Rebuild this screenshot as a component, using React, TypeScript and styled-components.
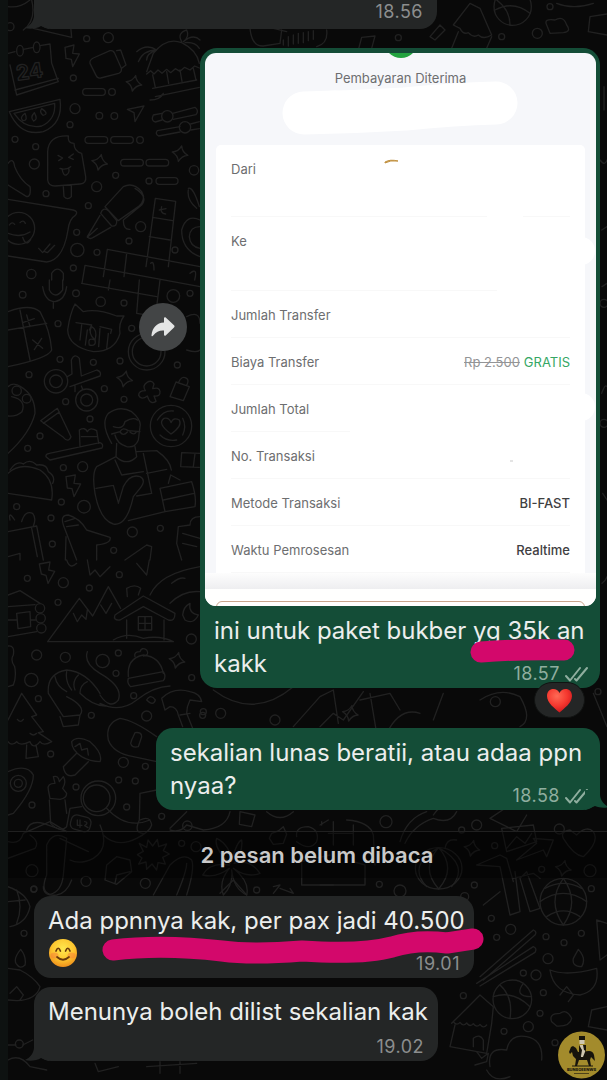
import React from "react";
import styled, { createGlobalStyle } from "styled-components";

const GlobalStyle = createGlobalStyle`
  *, *::before, *::after { box-sizing: border-box; }
  html, body { margin: 0; background: #090909; }
  body { font-family: Inter, Roboto, "Liberation Sans", sans-serif; color: #eceeed; }
  p, dl, dd, h2 { margin: 0; }
`;

const Screen = styled.div`
  position: relative;
  min-height: 100vh;
  padding-bottom: 18px;
  overflow: hidden;
  border-left: 8px solid #0e1211;
  background: #090909;
`;

const WallpaperSvg = styled.svg`
  position: absolute;
  top: 0;
  left: -8px;
  fill: none;
  stroke: #212121;
  stroke-linecap: round;
  stroke-linejoin: round;
`;

const Thread = styled.main`
  position: relative;
  display: flex;
  flex-direction: column;
`;

const Row = styled.div<{ $side: "in" | "out"; $gap: number }>`
  display: flex;
  align-items: center;
  justify-content: ${(p) => (p.$side === "out" ? "flex-end" : "flex-start")};
  gap: 13px;
  margin-top: ${(p) => p.$gap}px;
  padding: 0 7px 0 26px;
`;

const Bubble = styled.article<{ $side: "in" | "out"; $width: number; $flatTop?: boolean }>`
  position: relative;
  width: ${(p) => p.$width}px;
  max-width: 100%;
  border-radius: ${(p) => (p.$flatTop ? "0 0 17px 17px" : "17px")};
  background: ${(p) => (p.$side === "out" ? "#144d37" : "#242626")};
`;

const Body = styled.div`
  display: flow-root;
  padding: 8px 8px 4px 14px;
`;

const Message = styled.p`
  display: inline;
  font-size: 24px;
  line-height: 33px;
`;

const Meta = styled.span<{ $side: "in" | "out"; $offset: number }>`
  float: right;
  display: flex;
  align-items: center;
  gap: 5px;
  margin-top: ${(p) => p.$offset}px;
  margin-right: ${(p) => (p.$side === "out" ? 4 : 6)}px;
  font-size: 18px;
  line-height: 20px;
  letter-spacing: 0.5px;
  color: ${(p) => (p.$side === "out" ? "#8fae9f" : "#8c8e8e")};
`;

const Tail = styled.svg<{ $side: "in" | "out" }>`
  position: absolute;
  bottom: 0;
  ${(p) => (p.$side === "out" ? "right: -9px;" : "left: -9px;")}
  fill: ${(p) => (p.$side === "out" ? "#144d37" : "#242626")};
`;

const Marker = styled.svg`
  position: absolute;
  z-index: 1;
  overflow: visible;
  fill: none;
  stroke: #d3086b;
  stroke-width: 21;
  stroke-linecap: round;
  stroke-linejoin: round;
  pointer-events: none;
`;

const ForwardButton = styled.button`
  display: grid;
  place-items: center;
  flex: none;
  width: 48px;
  height: 48px;
  margin-bottom: 82px;
  padding: 0;
  border: 0;
  border-radius: 50%;
  background: #434546;
`;

const Reaction = styled.button`
  position: absolute;
  right: 15px;
  bottom: -30px;
  display: grid;
  place-items: center;
  width: 51px;
  height: 36px;
  padding: 0;
  border: 1px solid #111312;
  border-radius: 18px;
  background: #242626;
`;

const Receipt = styled.section`
  position: relative;
  margin: 0 4px 0 5px;
  border-radius: 11px;
  overflow: hidden;
  background: #f6f7fa;
  color: #6d6e70;
  font-size: 13px;
  line-height: 17px;
`;

const BubbleTop = styled.div`
  padding-top: 5px;
`;

const ReceiptHeader = styled.header`
  height: 92px;
  padding-top: 17px;
  text-align: center;
`;

const ReceiptTitle = styled.h2`
  font-size: 13px;
  line-height: 17px;
  font-weight: 400;
`;

const ReceiptArt = styled.svg`
  position: absolute;
  top: 0;
  left: 50%;
  margin-left: -196px;
`;

const ReceiptCard = styled.dl`
  margin: 0 11px;
  padding: 0 15px;
  border-radius: 5px 5px 0 0;
  background: #ffffff;
`;

const ReceiptRow = styled.div<{ $tall?: boolean }>`
  display: flex;
  justify-content: space-between;
  height: ${(p) => (p.$tall ? 74 : 47)}px;
  padding-top: 16px;
  border-bottom: 1px solid #f8f8f8;
`;

const Value = styled.dd`
  color: #3f4042;
  font-weight: 500;
`;

const Struck = styled.s`
  margin-right: 4px;
  font-weight: 400;
  color: #939496;
`;

const Free = styled.span`
  font-weight: 400;
  color: #35a765;
`;

const Fade = styled.div`
  height: 16px;
  background: linear-gradient(#fdfdfd, #eeeef0);
`;

const ReceiptFooter = styled.footer`
  height: 17px;
  padding: 12px 11px 0;
  background: #fffffe;
  overflow: hidden;
`;

const FooterOutline = styled.div`
  height: 20px;
  border: 1px solid #c9a58c;
  border-radius: 6px;
`;

const UnreadBand = styled.div`
  display: flex;
  justify-content: center;
  margin-top: 21px;
  padding: 7px 0 7px 19px;
  border-top: 1px solid #202020;
  background: rgba(0, 0, 0, 0.4);
  font-size: 22px;
  line-height: 32px;
  font-weight: 600;
  color: #c9c9c9;
`;

const Badge = styled.svg`
  position: absolute;
  right: 1px;
  bottom: 0;
`;

const InlineEmoji = styled.svg`
  vertical-align: -6px;
`;

const star = "M0 -24 Q5 -6 24 0 Q6 5 0 24 Q-5 6 -24 0 Q-6 -5 0 -24Z";

const Dots = ({ at }: { at: number[][] }) => (
  <>
    {at.map(([x, y, r], i) => (
      <circle key={i} cx={x} cy={y} r={r} />
    ))}
  </>
);

const Stars = ({ at }: { at: number[][] }) => (
  <>
    {at.map(([x, y], i) => (
      <path key={i} d={star} transform={`translate(${x} ${y}) rotate(12)`} />
    ))}
  </>
);

const Wallpaper = () => (
  <WallpaperSvg width="607" height="1080" viewBox="0 0 1821 3240" strokeWidth="4" aria-hidden="true">
    <g>
      <path d="M24 20Q60 25 90 0M95 0Q110 60 70 90M100 85L215 112L212 80M25 160L45 155M70 148L100 142M120 137L150 132L155 190L175 245L50 285L30 195M45 270L175 235" />
      <ellipse cx="60" cy="152" rx="10" ry="16" />
      <ellipse cx="110" cy="142" rx="10" ry="16" />
      <text x="48" y="236" fontSize="62" fontFamily="Inter" fontWeight="700" transform="rotate(-8 90 210)">24</text>
      <path d="M195 142L222 135L218 160L238 162L218 200L214 178L198 175Z" />
      <path d="M270 190Q268 180 280 174L330 152Q340 150 344 160L364 205Q366 216 356 220L302 234Q292 236 288 226ZM350 152L362 150L378 195L366 204" />
      <path d="M440 215L460 160Q500 110 545 128Q590 150 598 190M440 222L452 212L462 222L474 210L486 220L500 208L512 218L526 206L540 214L554 202L570 210L584 198L598 204M458 225L466 262M500 215L506 250M540 210L546 244M580 205L588 240M458 265L590 240M466 290L598 262M450 300Q480 300 490 280M410 155Q440 130 470 150Q430 150 415 185M470 150Q440 160 440 180M545 125Q530 100 560 90Q570 110 550 125Q580 100 600 120M555 128Q585 125 598 145" />
      <rect x="248" y="266" width="68" height="20" rx="10" />
      <rect x="255" y="410" width="68" height="20" rx="10" />
      <rect x="332" y="410" width="68" height="20" rx="10" />
      <rect x="362" y="478" width="68" height="20" rx="10" />
      <rect x="438" y="478" width="68" height="20" rx="10" />
      <rect x="468" y="533" width="66" height="20" rx="10" />
      <path d="M382 328L432 318L405 365L402 338Z" />
      <path d="M28 335L180 298Q190 370 130 395Q60 410 28 335ZM42 340L164 310Q168 358 125 378Q75 388 42 340M75 340q-18 14-6 22q16 0 6-22M103 338q-14 14-2 25q14-4 2-25M125 326q-8 10 4 20q20-4 -4-20" />
      <path d="M485 340L460 345Q452 362 466 366L486 360M518 340L585 322Q598 332 588 344L520 358M540 380L472 392Q464 402 476 408L540 396M572 372L598 365M572 390L598 386" />
      <circle cx="502" cy="349" r="17" /><circle cx="555" cy="382" r="17" />
      <path d="M143 455Q145 405 205 408Q202 430 222 430Q222 455 245 460L257 530Q260 550 240 552L165 558Q145 558 143 540ZM190 560L192 590Q203 602 214 590L214 556M174 466l14 8l-12 8M220 462l-14 10l14 6M180 505Q196 512 212 500M186 506Q190 530 200 524Q210 518 206 504" />
      <path d="M24 490Q40 470 44 500Q60 540 90 560Q94 590 80 590L24 555M24 598L220 630Q236 634 226 646Q208 656 204 690Q190 780 140 786L24 768" />
      <circle cx="56" cy="685" r="48" />
      <path d="M28 675q8-12 16-2M60 668q10-10 16 2M24 700Q60 715 90 696M68 712q10 30 24 6M116 745L128 758L150 732M134 755L142 758L164 736" />
      <path d="M315 620L370 560Q400 545 425 575Q440 600 415 620L355 662ZM302 640Q308 620 325 632L350 662Q352 680 335 678ZM300 646L262 710Q270 720 280 712L332 682M262 712L292 685M405 565Q445 590 425 615L370 660Q370 690 390 688" />
      <path d="M466 595L527 604L505 800M466 595L438 800M458 652L518 662M448 710L510 720M322 748L600 800M322 748L310 830M380 760L372 830M255 796L600 860M255 796L246 850M485 620q-6 20 12 22M478 630l20-4M452 790q10-10 10 20M570 820q24-20 14 20" />
      <path d="M600 660Q560 640 545 690Q545 750 600 770M600 680Q570 680 568 710Q570 740 600 745M565 565Q580 560 598 620M565 570Q560 600 590 625M155 840V820Q172 795 190 820V840" />
    </g>
    <Dots at={[[260,116,9],[325,113,15],[220,234,9],[336,276,10],[225,326,15],[210,374,9],[298,347,10],[343,348,10],[45,418,9],[107,440,9],[420,420,10],[103,492,15],[138,581,9],[347,526,9],[290,560,15],[447,543,9],[582,511,14],[265,617,9],[422,680,15],[230,697,9],[387,723,9],[232,750,20],[291,757,9],[525,750,9],[220,804,9],[94,822,14],[30,80,12]]} />
    <Stars at={[[402,250],[299,487],[540,461]]} />

    <g transform="translate(0 840)">
      <path d="M148 0V30Q165 60 188 30V0M128 20Q135 65 165 65Q195 60 200 20M160 65V85M245 10L470 50M330 0L325 30M418 0L410 100L460 108M480 0L470 80M24 95Q90 70 120 95Q150 150 155 210Q145 235 24 260M24 150L140 130M60 90L90 240M68 128l35-12M80 105l10 35M98 180l30 25M125 175l-22 34" />
      <path d="M225 72L250 95Q290 85 350 108L372 108Q355 130 360 160Q345 215 280 215Q205 200 203 150Q210 100 225 72ZM228 128L275 135L268 150M245 135L240 180M262 150L256 195M300 140L335 148L332 160M300 145L296 200M325 160L320 205M268 195Q262 170 285 180Q294 150 275 140Q262 160 285 180Q290 200 268 195" />
      <circle cx="440" cy="215" r="55" /><circle cx="440" cy="215" r="43" />
      <path d="M560 110Q600 90 600 130M560 210Q590 220 600 210" />
      <circle cx="168" cy="304" r="35" /><circle cx="168" cy="304" r="19" />
      <circle cx="260" cy="360" r="33" /><circle cx="260" cy="360" r="18" />
      <path d="M202 290L216 282L214 240Q224 218 238 235L244 288L290 270Q306 275 300 288L210 320M225 335V318M244 318L248 328" />
      <path d="M440 308q16-10 22 4l-4 14q20-6 22 8q2 16-18 14l6 16q-14 10-22-6l-4-10q-18 14-26-2q0-14 20-14q-10-14 4-24M510 350L528 306L568 320L550 362ZM535 308Q545 285 560 295Q568 300 560 316" />
      <path d="M24 320Q40 305 62 320Q105 345 105 400Q90 460 24 520M35 350Q80 360 66 395Q50 410 24 408" />
      <circle cx="50" cy="332" r="14" /><circle cx="80" cy="356" r="13" />
      <path d="M122 422L172 385L213 470Q205 490 190 472ZM130 430L178 396M138 530Q136 522 148 520L300 488Q312 492 306 504L150 540ZM240 500L238 450Q255 440 262 455Q270 440 290 452L296 490M244 470H290" />
      <path d="M335 490Q300 430 325 400Q360 375 395 395Q425 420 420 440L415 480Q405 505 380 500Q350 490 345 465M340 440Q370 450 375 425Q400 410 412 420M335 462L360 455Q368 440 385 452L420 455M360 456q10 14 22 0M390 456q12 12 20-2M350 490L348 530Q380 560 410 530L405 500M348 530L290 560Q275 580 285 640Q300 720 340 732Q380 740 400 650M410 515L470 512Q510 540 514 570M345 540L365 585L430 575M355 670L370 620Q390 580 420 590Q440 600 420 625L400 650M430 520L455 640L410 648M440 580L500 568M288 625L340 616M340 616L355 668M480 625L575 605Q590 650 585 680L495 695ZM490 660L582 640M505 610L512 585L540 600M385 722L495 695" />
      <circle cx="513" cy="438" r="62" /><path d="M472 420Q490 390 520 393M548 415Q560 440 548 465M480 465Q500 485 530 480M513 462Q470 430 492 415Q508 412 513 428Q520 410 538 420Q548 438 513 462" />
      <path d="M600 520L545 518L542 560L598 562M585 520L580 560" />
      <path d="M24 580Q60 545 120 570Q165 600 155 660L24 640M30 570Q50 540 70 552Q90 535 110 555Q140 550 145 575Q168 590 158 610" />
      <path d="M198 590L226 585L222 610L242 612L222 650L216 626L202 624Z" />
      <path d="M30 720Q24 690 44 720M65 725Q75 690 98 700Q110 715 100 738M24 755L110 738L130 840M95 745L112 830M24 830L60 820V840M190 735Q180 705 205 705Q240 715 260 750L330 772Q336 790 290 795L290 840M190 735L230 840M195 725L225 715M200 740L235 735M198 770L196 840M375 840L440 795L455 800L450 840M600 710Q570 710 570 735L535 740L530 790L545 840M548 760L600 775M548 790L590 800" />
    </g>
    <Dots at={[[68,884,10],[228,880,10],[302,905,14],[372,909,9],[520,888,19],[570,880,9],[174,971,9],[395,985,9],[180,1078,9],[87,1124,9],[280,1087,9],[360,1083,9],[532,1095,9],[313,1166,9],[197,1205,9],[372,1198,9],[120,1308,9],[270,1257,9],[83,1345,9],[190,1403,9],[248,1400,15],[184,1506,9],[50,1520,9],[252,1520,19],[153,1554,9],[397,1596,15],[481,1585,9],[157,1632,9],[341,1651,9]]} />
    <Stars at={[[374,1137]]} />

    <g transform="translate(0 1680)">
      <path d="M118 12L150 6L146 30L164 34L144 70L138 46L124 42ZM200 0Q210 30 230 10M262 0L270 45L285 30L300 50L330 20M410 10L440 45L448 0M450 105Q480 40 600 20M515 70Q540 50 555 55M510 130Q550 90 600 95M548 165Q550 140 570 130Q565 160 595 165Q580 195 555 180Z" />
      <path d="M24 105L60 92L120 130M24 140L105 134M24 230L110 215M50 160L90 155L92 200L54 206ZM24 180H50M92 180H108" />
      <circle cx="120" cy="145" r="14" /><circle cx="122" cy="175" r="14" /><circle cx="124" cy="205" r="14" />
      <path d="M143 245L238 115L278 168L325 80L362 145M143 245H520M220 160L232 185L245 165L258 178L262 150M302 135L318 160L335 130M345 165L430 108L525 160Q525 185 505 180L430 140L360 180Q338 182 345 165ZM380 180V235M492 180V240M382 110L380 85Q405 70 422 85L415 105M415 170H455V210H415ZM435 170V210M415 190H455M340 240Q380 215 430 235Q480 225 520 245" />
      <path d="M24 258Q45 255 40 285Q30 300 44 320Q50 350 40 375L24 380M145 400Q140 340 200 330Q260 335 300 400M145 400L190 470L240 465Q260 440 200 410M165 350Q170 380 200 395M200 335Q195 365 215 390M235 345Q215 365 225 390M262 365Q240 375 240 400Q280 440 320 438M180 470L190 500L235 495L240 465M262 275Q250 310 300 340Q370 380 355 420Q330 450 300 405M300 430Q360 460 410 420Q460 380 510 378M440 420q12-20 26 0q-6 20-26 0" />
      <path d="M385 350Q380 295 430 285Q480 290 490 340M385 355L490 335Q500 350 490 362L392 380Q380 370 385 355ZM405 290Q400 275 420 275Q425 260 440 270Q450 285 430 288" />
      <path d="M65 400L24 480M65 400L110 465L95 470L130 515L115 518L155 545Q130 560 120 545Q100 570 90 545Q60 560 50 545Q35 560 24 545M80 555L78 595L115 590L108 555M90 520q10 10 20 0M52 478q10 12 18 0" />
      <path d="M485 415Q520 380 570 395Q600 400 605 425L570 420Q560 440 560 460L580 510M485 415L495 450L510 440Q530 440 535 465L548 500M540 465L570 460" />
      <path d="M325 540Q315 490 360 475Q400 480 470 530M325 540Q340 580 400 590L470 605M395 540L405 518Q425 515 425 530L415 560Q395 565 392 550Z" />
      <path d="M215 545Q230 525 270 545Q310 580 300 605Q270 605 245 590Q215 570 215 545ZM230 580L190 620Q195 655 225 645L265 605M225 560L240 550L245 570L262 565L265 585" />
      <path d="M24 635Q80 610 100 645Q100 690 40 760L24 765" />
      <circle cx="55" cy="670" r="24" /><circle cx="55" cy="670" r="12" />
      <path d="M145 690Q140 670 165 670L160 650Q175 645 178 665L190 650Q200 665 188 685L200 700Q200 715 180 718L150 715ZM148 720L152 790Q180 820 200 800L210 745L245 740M195 720L200 760" />
      <circle cx="295" cy="715" r="52" /><circle cx="290" cy="715" r="40" />
      <rect x="212" y="768" width="60" height="44" rx="16" transform="rotate(15 242 790)" />
      <path d="M232 780v16h14M240 780v22M254 785q14 2 0 12l10 6M320 745Q380 810 450 780M80 810Q90 780 130 790L200 815M420 700L470 690M420 700L418 780Q400 820 430 820M470 605" />
    </g>
    <Dots at={[[82,1735,9],[190,1748,15],[358,1724,9],[268,1764,9],[174,1807,9],[110,1965,15],[196,1972,15],[308,1983,20],[355,1959,9],[574,1917,15],[348,2020,9],[94,2040,20],[575,2033,9],[115,2096,9],[401,2087,9],[274,2146,9],[440,2148,15],[608,2146,9],[152,2262,9],[370,2287,15],[436,2299,9],[356,2340,9],[406,2343,9],[228,2361,9],[96,2415,9],[380,2421,9],[485,2449,9]]} />
    <Stars at={[[531,1981]]} />

    <g transform="translate(0 2415)">
      <path d="M24 110Q60 120 70 85L150 50L200 80M90 90Q120 110 105 130L24 160M140 120Q160 75 200 100L190 210Q185 260 150 268Q120 260 140 210ZM180 100L265 140M300 60Q330 130 280 160Q240 180 210 165M310 90Q350 130 410 100Q450 80 455 60Q450 30 420 45M510 70L560 20M510 75Q540 85 560 60L610 75Q680 70 690 20M720 20L765 30L755 65L718 58ZM800 20Q840 55 880 20" />
      <circle cx="562" cy="62" r="14" />
      <path d="M418 115l22 12l4-22l14 18l14-20l4 22l24-8l-10 20l18 10l-20 10l8 20l-22-4l-4 22l-14-18l-16 16l-2-22l-22 6l10-18l-14-10l18-10ZM320 180L350 155L390 165L395 200L350 238L315 225ZM345 235L350 210L390 200M460 270L510 180Q550 140 575 165Q585 190 560 270M530 270Q560 200 560 175" />
      <path d="M690 175Q640 130 650 100Q690 120 695 170Q710 110 725 105Q730 140 702 175Q750 160 780 205Q740 220 700 190Q750 230 740 270Q700 250 695 195Q700 240 670 270Q655 230 688 190Q650 220 608 210Q630 170 688 180" />
      <path d="M815 85L835 78L850 65L860 88L850 115L820 118L808 100ZM890 95Q885 65 925 65Q960 75 950 110Q930 140 890 110M905 240V170L990 150M905 240H1000M965 50V60M820 265L840 240L820 245M840 250L880 265L870 250" />
      <path d="M985 45L960 60M1010 0Q1025 20 1040 0M1040 45Q1110 50 1120 90L1125 180M1000 50V120M1060 60V120M985 85H1060M1095 240V180L1060 170M1095 240H960M1200 110Q1220 40 1280 20M1215 115Q1240 60 1300 40Q1350 60 1370 20M1300 30Q1320 0 1340 0" />
      <ellipse cx="1316" cy="190" rx="70" ry="62" />
      <path d="M1316 128Q1260 190 1316 252M1316 128Q1370 190 1316 252M1316 128Q1220 180 1280 245M1316 128Q1410 180 1355 245M1335 130Q1340 100 1370 105M1470 40L1530 0M1470 40L1550 80L1580 30M1505 70L1600 60L1610 110L1520 140ZM1520 130L1550 95L1575 115L1595 85M1550 165L1610 115L1600 100L1660 105L1640 155L1630 135ZM1690 100Q1680 80 1710 75L1730 90Q1760 60 1780 80Q1800 110 1750 155Q1720 150 1690 100M1430 180L1500 150L1520 160L1540 230M1430 180L1500 185L1530 330L1560 320L1545 200M1560 220L1580 200L1620 310L1590 320ZM1450 300L1500 260M1540 220L1600 205L1620 220" />
      <circle cx="1690" cy="290" r="70" />
      <path d="M1620 290Q1690 240 1760 290M1635 250Q1690 220 1745 250M1640 335Q1690 300 1740 335M1690 220Q1640 290 1690 360M1690 220Q1740 290 1690 360" />
    </g>
    <Dots at={[[96,2612,18],[258,2644,15],[101,2668,9],[436,2650,15],[545,2530,9],[588,2540,15],[770,2670,9],[1158,2465,18],[1430,2475,15],[1385,2490,9],[1678,2487,15],[1138,2653,9],[1200,2673,18],[1423,2655,9],[1484,2537,9],[1770,2612,18],[1625,2608,9],[1774,2666,9],[1394,2690,12]]} />
    <Stars at={[[1416,2545],[1690,2605]]} />

    <g transform="translate(0 2640)">
      <path d="M24 20Q80 40 90 80Q80 130 30 140M24 65L75 60M50 30Q70 80 50 130M130 20Q130 50 170 45Q200 40 215 0M660 40L700 0L740 45M62 208Q80 230 75 255Q60 270 48 250Q40 235 62 208ZM24 265L60 270Q100 290 120 320Q110 360 50 362L24 360M30 340L50 320L70 345L60 360M24 495H48M68 495L98 480M24 540Q60 520 90 560L140 570M285 550L295 575L355 560M440 560L590 550M480 545V580M540 545V580" />
      <circle cx="58" cy="492" r="12" />
      <path d="M1440 290L1600 150Q1612 155 1605 165L1450 300M1430 310L1600 200Q1612 205 1605 217L1440 318M1355 430L1405 380L1440 345L1480 380L1475 430L1470 460M1360 425q10 14 20 2q10 14 20 2q10 14 20 2q10 14 20 2q10 14 20 2M1365 435L1350 500L1460 520L1470 460M1420 500V475Q1440 460 1450 480V510" />
      <circle cx="1537" cy="358" r="58" />
      <path d="M1480 350Q1540 330 1590 380M1500 315Q1540 350 1530 415M1570 310Q1540 350 1595 350M1430 515L1445 535L1465 520L1460 545L1425 555M1650 270Q1700 290 1790 265Q1800 330 1740 345Q1660 340 1650 270M1735 208Q1760 235 1745 260Q1715 260 1720 235ZM1680 345L1700 320L1720 345L1705 365M1655 425Q1645 400 1680 400Q1700 385 1715 415Q1710 440 1670 438ZM1775 390L1821 380M1775 390L1765 440L1821 450M1790 120L1821 130M1790 120L1800 240L1821 225M1470 560Q1460 500 1520 510Q1530 460 1580 470Q1630 480 1625 540M1460 570Q1480 610 1530 590" />
    </g>
    <Dots at={[[102,2667,9],[72,2800,9],[1474,2755,9],[1490,2812,9],[1532,2788,15],[1638,2810,9],[1744,2800,9],[1692,2828,9],[1644,2876,15],[1570,2919,9],[1608,2925,15],[1390,2987,9],[1630,2978,9],[1620,3040,9],[1585,3080,15],[1512,3094,9],[1665,3128,9]]} />

    <g>
      <path d="M750 85Q755 140 790 138L840 130L845 90M820 85L860 95M850 120V135M865 110V138M880 105V132M895 100V130M910 98V128M925 95V122M940 92V118M980 90Q985 130 950 140M1075 150L1085 112L1125 108L1115 145M1290 110L1320 75L1335 90L1305 120ZM1360 75L1410 10L1440 25L1475 105Q1450 120 1435 105Q1420 115 1405 98Q1390 105 1380 85L1360 75ZM1375 95L1355 145M1475 110L1460 145M1640 75Q1630 55 1665 60Q1690 45 1700 75Q1715 95 1690 98L1650 100ZM1770 50L1821 42M1770 50L1765 95L1821 105" />
      <circle cx="1538" cy="20" r="56" /><path d="M1490 0Q1530 30 1530 75M1485 30Q1540 0 1590 40M1670 10Q1720 30 1780 10" />
      <path d="M640 2070Q760 2160 880 2060M880 2180L960 2090L1000 2070L1015 2170M960 2180L1000 2140L1030 2160L1090 2075M1110 2080L1130 2200M1080 2100L1170 2080L1200 2130M1160 2200Q1200 2120 1260 2140M1300 2160L1330 2080M1440 2100Q1500 2060 1560 2090Q1600 2160 1560 2180M1780 2080L1821 2180" />
      <path d="M1812 260V330M1800 480Q1815 500 1821 480M1805 690L1821 680M1806 860L1821 850M1805 1180Q1815 1150 1821 1160M1808 1480L1821 1500M1806 1750Q1818 1740 1821 1730" />
    </g>
    <Dots at={[[1195,113,9],[1505,110,9],[1612,100,15],[1650,20,9],[610,2135,9],[662,2140,15],[825,2160,15],[1486,2105,15],[1794,2075,9],[1812,910,12],[1812,1270,12]]} />
    <Stars at={[[1051,2140]]} />
  </WallpaperSvg>
);

const Ticks = () => (
  <svg width="23" height="17" viewBox="0 0 23 17" fill="none" stroke="currentColor" strokeWidth="2" strokeLinecap="round" strokeLinejoin="round" role="img" aria-label="Terkirim">
    <path d="M1 10L5 14.500L15 2M10 13L11.500 14.500L22 2" />
  </svg>
);

const Smile = () => (
  <InlineEmoji width="30" height="30" viewBox="0 0 30 30" role="img" aria-label="Wajah tersenyum">
    <defs>
      <radialGradient id="smile" cx="50%" cy="35%" r="65%">
        <stop offset="0" stopColor="#ffe84f" />
        <stop offset="0.6" stopColor="#fdc62f" />
        <stop offset="1" stopColor="#ee8f1c" />
      </radialGradient>
    </defs>
    <circle cx="15" cy="15" r="14" fill="url(#smile)" />
    <ellipse cx="6.500" cy="17.500" rx="4" ry="3" fill="#f5763a" opacity="0.45" />
    <ellipse cx="23.500" cy="17.500" rx="4" ry="3" fill="#f5763a" opacity="0.45" />
    <path d="M8 13Q10.200 7.500 12.400 13M17.600 13Q19.800 7.500 22 13M9 19Q15 24.500 21 19" fill="none" stroke="#6b3a0c" strokeWidth="1.700" strokeLinecap="round" />
  </InlineEmoji>
);

const Heart = () => (
  <svg width="27" height="25" viewBox="0 0 27 25" role="img" aria-label="Hati">
    <defs>
      <radialGradient id="heart" cx="40%" cy="30%" r="75%">
        <stop offset="0" stopColor="#ff6a55" />
        <stop offset="0.55" stopColor="#f5382f" />
        <stop offset="1" stopColor="#c9141c" />
      </radialGradient>
    </defs>
    <path d="M13.500 24.500C9 20.500 1 15 1 8C1 3.500 4 1 7.300 1C10 1 12.400 2.500 13.500 5C14.600 2.500 17 1 19.700 1C23 1 26 3.500 26 8C26 15 18 20.500 13.500 24.500Z" fill="url(#heart)" />
  </svg>
);

const InTail = () => (
  <Tail $side="in" width="24" height="20" viewBox="0 0 24 20" aria-hidden="true">
    <path d="M9 0V6C9 12 5 17 0 19C5 20.500 12 19.500 16 17L24 20V0Z" />
  </Tail>
);

const receiptRows: { label: string; tall?: boolean; value?: React.ReactNode }[] = [
  { label: "Ke", tall: true },
  { label: "Jumlah Transfer" },
  { label: "Biaya Transfer", value: <><Struck>Rp 2.500</Struck><Free>GRATIS</Free></> },
  { label: "Jumlah Total" },
  { label: "No. Transaksi" },
  { label: "Metode Transaksi", value: "BI-FAST" },
  { label: "Waktu Pemrosesan", value: "Realtime" },
];

const BareBody = styled(Body)`
  padding-top: 2px;
  padding-bottom: 7px;
`;

const TopReceiptRow = styled(ReceiptRow)`
  height: 72px;
`;

const MarkerShort = styled(Marker)`
  right: 25px;
  bottom: 26px;
`;

const MarkerLong = styled(Marker)`
  left: 68px;
  bottom: 12px;
`;

export default function App() {
  return (
    <>
      <GlobalStyle />
      <Screen>
        <Wallpaper />
        <Thread>
          <Row $side="in" $gap={0}>
            <Bubble $side="in" $width={403} $flatTop>
              <InTail />
              <BareBody>
                <Meta $side="in" $offset={0}>18.56</Meta>
              </BareBody>
            </Bubble>
          </Row>

          <Row $side="out" $gap={19}>
            <ForwardButton aria-label="Teruskan">
              <svg width="24" height="20" viewBox="0 0 24 20" fill="#e4e5e5" aria-hidden="true">
                <path d="M13 1.200C13 0.200 14 0 14.700 0.600L23 8.200C23.700 8.900 23.700 9.900 23 10.600L14.700 18.400C14 19 13 18.700 13 17.700V13.600C8.500 13.300 5.200 14.600 2.200 18.600C1.300 19.800 0.300 19.300 0.500 18C1.400 10.700 5.600 5.800 13 5.400Z" />
              </svg>
            </ForwardButton>
            <Bubble $side="out" $width={400}>
              <BubbleTop>
                <Receipt>
                  <ReceiptHeader>
                    <ReceiptTitle>Pembayaran Diterima</ReceiptTitle>
                  </ReceiptHeader>
                  <ReceiptCard>
                    <TopReceiptRow>
                      <dt>Dari</dt>
                    </TopReceiptRow>
                    {receiptRows.map((row) => (
                      <ReceiptRow key={row.label} $tall={row.tall}>
                        <dt>{row.label}</dt>
                        {row.value && <Value>{row.value}</Value>}
                      </ReceiptRow>
                    ))}
                  </ReceiptCard>
                  <Fade />
                  <ReceiptFooter>
                    <FooterOutline />
                  </ReceiptFooter>
                  <ReceiptArt width="391" height="553" viewBox="0 0 391 553" fill="none" aria-hidden="true">
                    <circle cx="196" cy="-12" r="17" fill="#23a33f" />
                    <path d="M99 60L130 59M99 60Q150 59 200 56Q250 51 291 50" stroke="#fff" strokeWidth="43" strokeLinecap="round" />
                    <path d="M180 109Q185 106 193 108Q185 107 180 110Z" fill="#c29242" stroke="#c29242" strokeWidth="1" />
                    <path d="M282 163H318M292 237H366M145 380H366" stroke="#fff" strokeWidth="4" />
                    <circle cx="376" cy="198" r="14" fill="#fff" />
                    <circle cx="376" cy="354" r="14" fill="#fff" />
                    <path d="M305 408H308" stroke="#c9c9c9" strokeWidth="1" />
                  </ReceiptArt>
                </Receipt>
              </BubbleTop>
              <Body>
                <Message>ini untuk paket bukber yg 35k an kakk</Message>
                <Meta $side="out" $offset={17}>18.57<Ticks /></Meta>
              </Body>
              <MarkerShort width="105" height="22" viewBox="0 0 105 22" aria-hidden="true">
                <path d="M11 12Q50 9 94 10" />
              </MarkerShort>
              <Reaction aria-label="Reaksi hati">
                <Heart />
              </Reaction>
            </Bubble>
          </Row>

          <Row $side="out" $gap={40}>
            <Bubble $side="out" $width={444}>
              <Tail $side="out" width="24" height="20" viewBox="0 0 24 20" aria-hidden="true">
                <path d="M15 0V4C15 10 19 15 24 17C19 18.500 14 17.500 10 16L0 20V0Z" />
              </Tail>
              <Body>
                <Message>sekalian lunas beratii, atau adaa ppn nyaa?</Message>
                <Meta $side="out" $offset={17}>18.58<Ticks /></Meta>
              </Body>
            </Bubble>
          </Row>

          <UnreadBand>2 pesan belum dibaca</UnreadBand>

          <Row $side="in" $gap={18}>
            <Bubble $side="in" $width={440}>
              <Body>
                <Message>Ada ppnnya kak, per pax jadi 40.500 <Smile /></Message>
                <Meta $side="in" $offset={17}>19.01</Meta>
              </Body>
              <MarkerLong width="382" height="36" viewBox="0 0 382 36" aria-hidden="true">
                <path d="M11 20Q60 14 120 21Q150 25 200 21Q260 25 290 17Q315 9 345 13L371 9" />
              </MarkerLong>
            </Bubble>
          </Row>

          <Row $side="in" $gap={9}>
            <Bubble $side="in" $width={404}>
              <InTail />
              <Body>
                <Message>Menunya boleh dilist sekalian kak</Message>
                <Meta $side="in" $offset={9}>19.02</Meta>
              </Body>
            </Bubble>
          </Row>
        </Thread>

        <Badge width="49" height="50" viewBox="0 0 49 50" role="img" aria-label="Logo berkuda">
          <circle cx="24.500" cy="25" r="23.500" fill="#a38b2c" />
          <g fill="#17140c">
            <path d="M22 6H28V10H22Z" />
            <path d="M12 22L14 17L16 16L19 18L21 22L32 21Q36 21 37 25L38 31L35 28L34 27L33 30L34 36H32L30 30L22 30L20 36H18L19 29L16 26L15 22L13 24Z" />
            <path d="M15 35.500H36V36.500H15Z" />
          </g>
          <path d="M22.500 10H27.500V14H22.500ZM23 15L28 15L28 22L26 27H24Z" fill="#cfc7b0" />
          <path d="M22 15L25 20L24 26L22 22ZM26 15H29V21L27 20Z" fill="#17140c" />
          <text x="24.500" y="41" fontSize="4" fontWeight="800" textAnchor="middle" fontFamily="Inter" fill="#17140c">BUNSOEENWS</text>
          <path d="M17 43.500H32" stroke="#4d4218" strokeWidth="1" />
        </Badge>
      </Screen>
    </>
  );
}
